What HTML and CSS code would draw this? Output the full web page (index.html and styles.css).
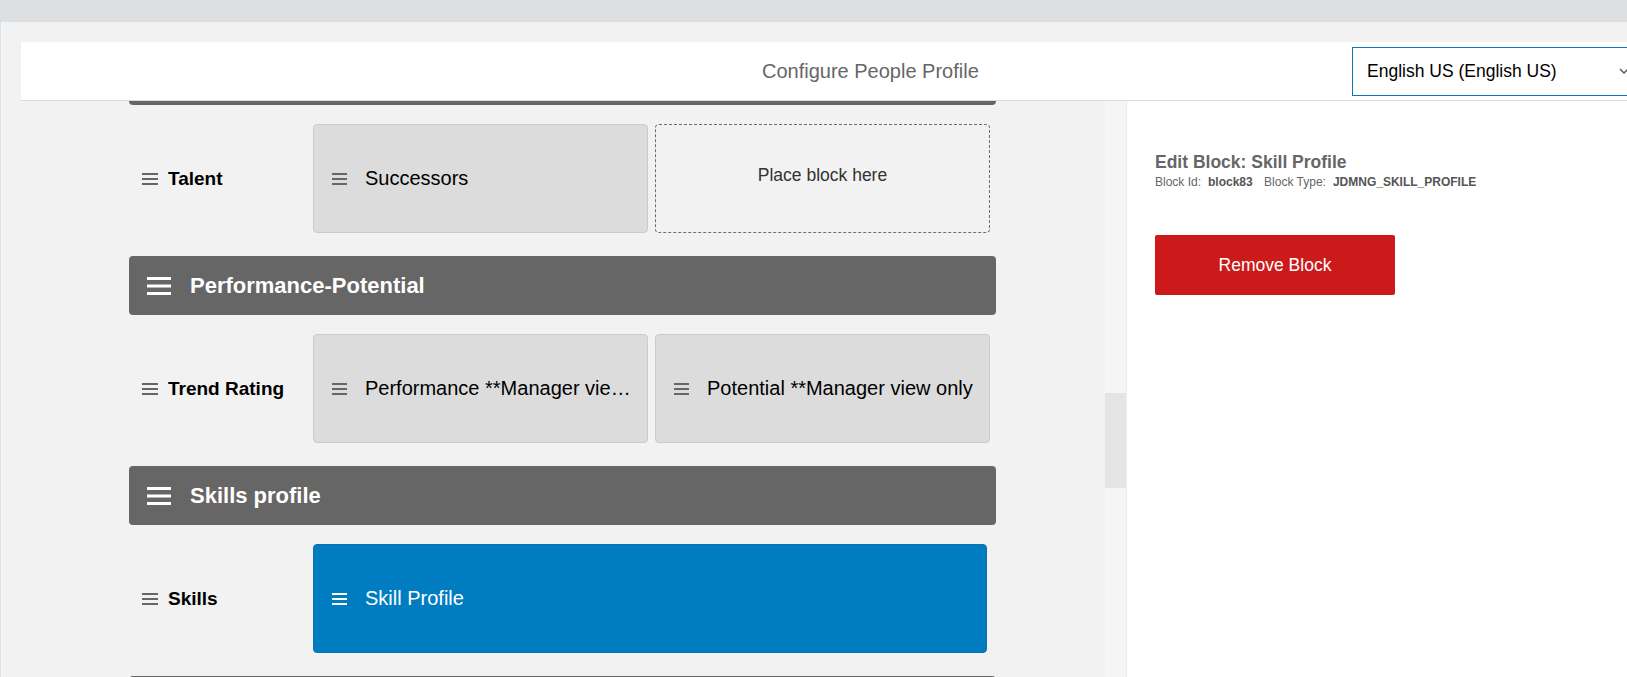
FILE: index.html
```html
<!DOCTYPE html>
<html lang="en">
<head>
    <meta charset="UTF-8">
    <title>Configure People Profile</title>
    <link rel="stylesheet" href="styles.css">
</head>
<body>
    <div class="topstrip"></div>

    <div class="frame">
        <div class="header">
            <div class="title">Configure People Profile</div>
            <div class="lang-select">
                <span>English US (English US)</span>
                <svg class="caret" width="10" height="6" viewBox="0 0 10 6"><path d="M1 1 L5 5 L9 1" fill="none" stroke="#555" stroke-width="1.4"/></svg>
            </div>
        </div>

        <div class="workspace">
            <div class="canvas">
                <div class="section-bar first"></div>

                <div class="row">
                    <div class="row-label">
                        <svg class="grip" width="16" height="12" viewBox="0 0 16 12"><rect y="0" width="16" height="2"/><rect y="5" width="16" height="2"/><rect y="10" width="16" height="2"/></svg>
                        Talent
                    </div>
                    <div class="blocks">
                        <div class="block">
                            <svg class="grip" width="15" height="12" viewBox="0 0 15 12"><rect y="0" width="15" height="2"/><rect y="5" width="15" height="2"/><rect y="10" width="15" height="2"/></svg>
                            <span class="block-name">Successors</span>
                        </div>
                        <div class="block placeholder">Place block here</div>
                    </div>
                </div>

                <div class="section-bar">
                    <svg class="bar-grip" width="24" height="18" viewBox="0 0 24 18"><rect y="0" width="24" height="3"/><rect y="7.5" width="24" height="3"/><rect y="15" width="24" height="3"/></svg>
                    Performance-Potential
                </div>

                <div class="row">
                    <div class="row-label">
                        <svg class="grip" width="16" height="12" viewBox="0 0 16 12"><rect y="0" width="16" height="2"/><rect y="5" width="16" height="2"/><rect y="10" width="16" height="2"/></svg>
                        Trend Rating
                    </div>
                    <div class="blocks">
                        <div class="block">
                            <svg class="grip" width="15" height="12" viewBox="0 0 15 12"><rect y="0" width="15" height="2"/><rect y="5" width="15" height="2"/><rect y="10" width="15" height="2"/></svg>
                            <span class="block-name">Performance **Manager view only</span>
                        </div>
                        <div class="block">
                            <svg class="grip" width="15" height="12" viewBox="0 0 15 12"><rect y="0" width="15" height="2"/><rect y="5" width="15" height="2"/><rect y="10" width="15" height="2"/></svg>
                            <span class="block-name">Potential **Manager view only</span>
                        </div>
                    </div>
                </div>

                <div class="section-bar">
                    <svg class="bar-grip" width="24" height="18" viewBox="0 0 24 18"><rect y="0" width="24" height="3"/><rect y="7.5" width="24" height="3"/><rect y="15" width="24" height="3"/></svg>
                    Skills profile
                </div>

                <div class="row">
                    <div class="row-label">
                        <svg class="grip" width="16" height="12" viewBox="0 0 16 12"><rect y="0" width="16" height="2"/><rect y="5" width="16" height="2"/><rect y="10" width="16" height="2"/></svg>
                        Skills
                    </div>
                    <div class="blocks single">
                        <div class="block selected">
                            <svg class="grip" width="15" height="12" viewBox="0 0 15 12"><rect y="0" width="15" height="2"/><rect y="5" width="15" height="2"/><rect y="10" width="15" height="2"/></svg>
                            <span class="block-name">Skill Profile</span>
                        </div>
                    </div>
                </div>

                <div class="section-bar"></div>
            </div>

            <div class="scroll-track">
                <div class="scroll-thumb"></div>
            </div>

            <div class="edit-panel">
                <div class="edit-title">Edit Block: Skill Profile</div>
                <div class="edit-meta">
                    <span>Block Id:</span><b>block83</b>
                    <span>Block Type:</span><b>JDMNG_SKILL_PROFILE</b>
                </div>
                <button class="remove-btn">Remove Block</button>
            </div>
        </div>
    </div>
</body>
</html>
```

FILE: styles.css
```css
body {
    margin: 0;
    padding: 0;
    font-family: 'Liberation Sans', Arial, sans-serif;
    background: #dde0e3;
    height: 677px;
    overflow: hidden;
}

.topstrip {
    height: 22px;
}

.frame {
    height: 655px;
    margin-left: 1px;
    border-left: 1px solid #f8f9f8;
    background: #f1f2f1;
    padding-top: 20px;
    padding-left: 19px;
    box-sizing: border-box;
    display: flex;
    flex-direction: column;
    overflow: hidden;
}

.header {
    height: 58px;
    background: #ffffff;
    border-bottom: 1px solid #dcdcdc;
    display: flex;
    align-items: center;
    overflow: hidden;
    flex-shrink: 0;
    position: relative;
    z-index: 2;
}

.title {
    margin-left: 741px;
    font-size: 20px;
    color: #666;
    white-space: nowrap;
}

.lang-select {
    margin-left: auto;
    margin-right: -15px;
    width: 290px;
    height: 49px;
    flex-shrink: 0;
    border: 1px solid #0a78bd;
    box-sizing: border-box;
    display: flex;
    align-items: center;
    padding: 0 12px 0 14px;
    font-size: 17.5px;
    color: #000;
    white-space: nowrap;
}

.lang-select .caret {
    margin-left: auto;
}

.workspace {
    flex: 1;
    display: flex;
    min-height: 0;
}

.canvas {
    width: 1084px;
    background: #f2f2f2;
    padding-left: 108px;
    box-sizing: border-box;
    overflow: hidden;
}

.section-bar {
    width: 867px;
    height: 59px;
    background: #666666;
    border-radius: 4px;
    display: flex;
    align-items: center;
    color: #ffffff;
    font-size: 22px;
    font-weight: bold;
    box-sizing: border-box;
    padding-left: 18px;
}

.section-bar.first {
    margin-top: -55px;
}

.bar-grip {
    fill: #ffffff;
    margin-right: 19px;
}

.row {
    width: 867px;
    display: flex;
    align-items: center;
    padding: 19px 6px 23px 0;
    box-sizing: border-box;
}

.row-label {
    width: 184px;
    flex-shrink: 0;
    display: flex;
    align-items: center;
    padding-left: 13px;
    box-sizing: border-box;
    font-size: 19px;
    font-weight: bold;
    color: #000;
}

.row-label .grip {
    fill: #666;
    margin-right: 10px;
}

.blocks {
    flex: 1;
    display: flex;
    gap: 7px;
    min-width: 0;
}

.blocks.single {
    padding-right: 3px;
}

.block {
    flex: 1 1 0;
    min-width: 0;
    height: 109px;
    background: #dcdcdc;
    border: 1px solid #cbcbcb;
    border-radius: 4px;
    box-sizing: border-box;
    display: flex;
    align-items: center;
    padding: 0 12px 0 18px;
    font-size: 20px;
    color: #000;
}

.block .grip {
    fill: #666;
    flex-shrink: 0;
    margin-right: 18px;
}

.block-name {
    white-space: nowrap;
    overflow: hidden;
    text-overflow: ellipsis;
}

.block.placeholder {
    background: transparent;
    border: 1px dashed #6e6e6e;
    justify-content: center;
    padding: 0 15px 6px;
    font-size: 17.5px;
    color: #333;
}

.block.selected {
    background: #007cc0;
    border-color: #0a72ad;
    color: #ffffff;
}

.block.selected .grip {
    fill: #ffffff;
}

.scroll-track {
    width: 21px;
    background: #f5f5f5;
    flex-shrink: 0;
}

.scroll-thumb {
    margin-top: 292px;
    height: 95px;
    background: #e4e4e4;
}

.edit-panel {
    flex: 1;
    background: #ffffff;
    border-left: 1px solid #ececec;
    padding: 51px 0 0 28px;
}

.edit-title {
    font-size: 17.5px;
    font-weight: bold;
    color: #666;
}

.edit-meta {
    margin-top: 2px;
    font-size: 12px;
    color: #666;
}

.edit-meta b {
    color: #555;
    margin: 0 8px 0 7px;
}

.remove-btn {
    display: block;
    margin-top: 46px;
    width: 240px;
    height: 60px;
    background: #cc1a1a;
    border: none;
    border-radius: 2px;
    color: #ffffff;
    font-family: 'Liberation Sans', Arial, sans-serif;
    font-size: 17.5px;
}
```
